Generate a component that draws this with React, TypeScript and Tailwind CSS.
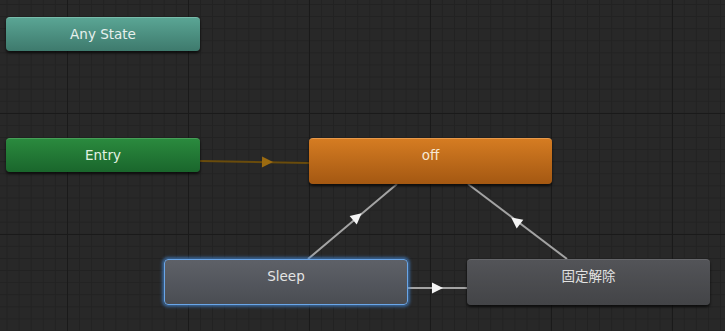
import React from 'react';

type NodeProps = {
  label: string;
  x: number;
  y: number;
  w: number;
  h: number;
  className: string;
};

// nodes sit on a free canvas, so each one is placed by its own coordinates
function StateNode({ label, x, y, w, h, className }: NodeProps) {
  return (
    <div
      className={`absolute rounded-[4px] pt-[7px] text-center leading-[18px] text-[13.5px] ${className}`}
      style={{ left: x, top: y, width: w, height: h }}
    >
      {label}
    </div>
  );
}

function Arrow({ x, y, angle, fill }: { x: number; y: number; angle: number; fill: string }) {
  return (
    <polygon
      points="6,0 -5,-5.5 -5,5.5"
      fill={fill}
      transform={`translate(${x} ${y}) rotate(${angle})`}
    />
  );
}

const dropShadow = 'shadow-[0_2px_3px_rgba(0,0,0,0.7)]';

export default function App() {
  return (
    <div className="relative h-[331px] w-[725px] overflow-hidden bg-[#282828] bg-[linear-gradient(to_right,#1a1a1a_1px,transparent_1px),linear-gradient(to_bottom,#1a1a1a_1px,transparent_1px),linear-gradient(to_right,#222222_1px,transparent_1px),linear-gradient(to_bottom,#222222_1px,transparent_1px)] bg-[size:121px_121px,121px_121px,12.1px_12.1px,12.1px_12.1px] bg-[position:67px_113px,67px_113px,6.5px_4px,6.5px_4px] font-['DejaVu_Sans','Noto_Sans_CJK_JP',sans-serif]">
      {/* transitions */}
      <svg className="absolute inset-0" width={725} height={331}>
        <line x1={200} y1={161} x2={310} y2={163} stroke="#6a4c0c" strokeWidth={2} />
        <Arrow x={267} y={162} angle={1} fill="#9c6b10" />

        <line x1={308} y1={259} x2={397} y2={184} stroke="#a3a3a3" strokeWidth={2} />
        <Arrow x={357} y={217} angle={-40.1} fill="#f4f4f4" />

        <line x1={567} y1={259} x2={468} y2={184} stroke="#a3a3a3" strokeWidth={2} />
        <Arrow x={516} y={221} angle={-142.9} fill="#f4f4f4" />

        <line x1={408} y1={288} x2={467} y2={288} stroke="#a3a3a3" strokeWidth={2} />
        <Arrow x={437} y={288} angle={0} fill="#f4f4f4" />
      </svg>

      <StateNode
        label="Any State"
        x={6}
        y={17}
        w={194}
        h={34}
        className={`border-t border-[#78bcab] bg-gradient-to-b from-[#5aa594] to-[#3e7a6d] text-[#e6f0ed] ${dropShadow}`}
      />
      <StateNode
        label="Entry"
        x={6}
        y={138}
        w={194}
        h={34}
        className={`border-t border-[#46a058] bg-gradient-to-b from-[#2a8a3e] to-[#1a662c] text-[#e2f2e2] ${dropShadow}`}
      />
      <StateNode
        label="off"
        x={309}
        y={138}
        w={243}
        h={46}
        className={`border-t border-[#e8994a] bg-gradient-to-b from-[#d57c22] to-[#a45812] text-[#f6e8d4] ${dropShadow}`}
      />
      <StateNode
        label="Sleep"
        x={164}
        y={259}
        w={244}
        h={46}
        className="border border-[#6aa6e8] bg-gradient-to-b from-[#5e6168] to-[#4a4d53] text-[#e4e4e4] shadow-[0_0_3px_2px_rgba(70,140,220,0.6)]"
      />
      <StateNode
        label="固定解除"
        x={467}
        y={259}
        w={243}
        h={46}
        className={`border-t border-[#66676b] bg-gradient-to-b from-[#535458] to-[#434447] text-[#e2e2e2] ${dropShadow}`}
      />
    </div>
  );
}
